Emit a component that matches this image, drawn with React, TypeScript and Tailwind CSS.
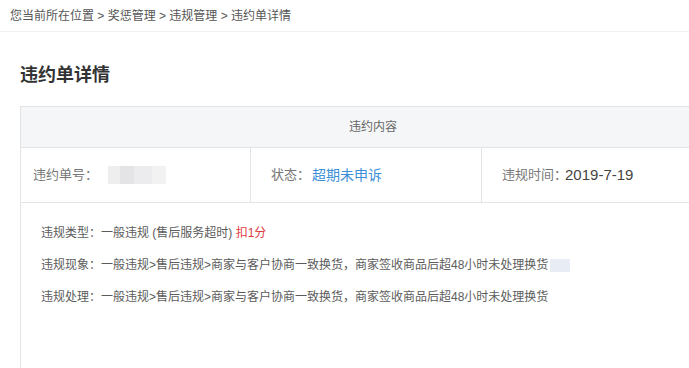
// 違約單詳情頁:麵包屑、標題、違約內容卡片。

const font = { fontFamily: '"Liberation Sans", "Noto Sans CJK SC", sans-serif' };

export default function App() {
  return (
    <div
      className="h-[368px] w-[689px] overflow-hidden bg-white text-[#555]"
      style={font}
    >
      {/* 麵包屑 */}
      <div className="h-[32px] border-b border-[#f0f0f0] pl-[10px] pt-[7px] text-[12px] leading-[18px] text-[#555]">
        您当前所在位置 &gt; 奖惩管理 &gt; 违规管理 &gt; 违约单详情
      </div>

      <h1 className="mt-[31px] pl-[20px] text-[18px] font-bold leading-[24px] text-[#333]">
        违约单详情
      </h1>

      <div className="ml-[20px] mt-[19px] w-[706px] border border-[#e3e4e6]">
        {/* 標題列 */}
        <div className="flex h-[41px] items-center justify-center border-b border-[#e3e4e6] bg-[#f5f6f8] text-[12px] text-[#666]">
          违约内容
        </div>

        {/* 基本資料 */}
        <div className="grid h-[55px] grid-cols-[230px_231px_1fr] border-b border-[#e3e4e6]">
          <div className="flex items-center border-r border-[#e3e4e6] pl-3">
            <span className="text-[13px] text-[#777]">违约单号：</span>
            <span className="ml-[10px] flex h-[18px] w-[58px]">
              <span className="h-full w-[12px] bg-[#eeeeef]" />
              <span className="h-full w-[14px] bg-[#e4e4e6]" />
              <span className="h-full w-[18px] bg-[#ececee]" />
              <span className="h-full w-[14px] bg-[#f2f2f3]" />
            </span>
          </div>
          <div className="flex items-center border-r border-[#e3e4e6] pl-[20px]">
            <span className="text-[13px] text-[#777]">状态：</span>
            <span className="ml-[2px] text-[14px] text-[#3d8fd6]">超期未申诉</span>
          </div>
          <div className="flex items-center pl-[20px]">
            <span className="text-[13px] text-[#777]">违规时间：</span>
            <span className="-ml-[2px] text-[15px] text-[#444]">2019-7-19</span>
          </div>
        </div>

        {/* 內容 */}
        <div className="flex h-[200px] flex-col gap-[14px] pl-[20px] pt-[21px] text-[12px] leading-[18px] text-[#5c5c5c]">
          <p>
            违规类型：一般违规 (售后服务超时) <span className="text-[#e0393e]">扣1分</span>
          </p>
          <p className="flex items-center">
            违规现象：一般违规&gt;售后违规&gt;商家与客户协商一致换货，商家签收商品后超48小时未处理换货
            <span className="ml-[2px] inline-block h-[13px] w-[20px] bg-[#e8ecf5]" />
          </p>
          <p>
            违规处理：一般违规&gt;售后违规&gt;商家与客户协商一致换货，商家签收商品后超48小时未处理换货
          </p>
        </div>
      </div>
    </div>
  );
}
